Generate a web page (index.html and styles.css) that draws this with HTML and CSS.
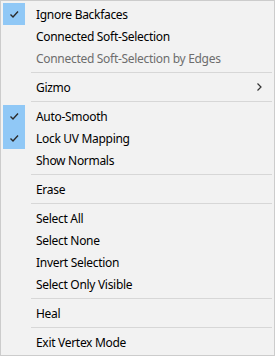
FILE: index.html
```html
<!DOCTYPE html>
<html>
<head>
<meta charset="utf-8">
<link rel="stylesheet" href="styles.css">
</head>
<body>
<div class="menu">
  <div class="item checked"><span class="check"><svg width="22" height="22" viewBox="0 0 22 22"><path d="M7.5 11.5 L10 14 L15 8.5" fill="none" stroke="#2b2b2b" stroke-width="1.4"/></svg></span><span class="label">Ignore Backfaces</span></div>
  <div class="item"><span class="check"></span><span class="label">Connected Soft-Selection</span></div>
  <div class="item disabled"><span class="check"></span><span class="label">Connected Soft-Selection by Edges</span></div>
  <div class="sep"></div>
  <div class="item"><span class="check"></span><span class="label">Gizmo</span><svg class="arrow" width="5" height="8" viewBox="0 0 5 8"><path d="M0.5 0.5 L4 4 L0.5 7.5" fill="none" stroke="#333" stroke-width="1.2"/></svg></div>
  <div class="sep"></div>
  <div class="item checked"><span class="check"><svg width="22" height="22" viewBox="0 0 22 22"><path d="M7.5 11.5 L10 14 L15 8.5" fill="none" stroke="#2b2b2b" stroke-width="1.4"/></svg></span><span class="label">Auto-Smooth</span></div>
  <div class="item checked"><span class="check"><svg width="22" height="22" viewBox="0 0 22 22"><path d="M7.5 11.5 L10 14 L15 8.5" fill="none" stroke="#2b2b2b" stroke-width="1.4"/></svg></span><span class="label">Lock UV Mapping</span></div>
  <div class="item"><span class="check"></span><span class="label">Show Normals</span></div>
  <div class="sep"></div>
  <div class="item"><span class="check"></span><span class="label">Erase</span></div>
  <div class="sep"></div>
  <div class="item"><span class="check"></span><span class="label">Select All</span></div>
  <div class="item"><span class="check"></span><span class="label">Select None</span></div>
  <div class="item"><span class="check"></span><span class="label">Invert Selection</span></div>
  <div class="item"><span class="check"></span><span class="label">Select Only Visible</span></div>
  <div class="sep"></div>
  <div class="item"><span class="check"></span><span class="label">Heal</span></div>
  <div class="sep"></div>
  <div class="item"><span class="check"></span><span class="label">Exit Vertex Mode</span></div>
</div>
</body>
</html>
```
FILE: styles.css
```css
html, body {
  margin: 0;
  padding: 0;
  background: #f2f2f2;
}
.menu {
  box-sizing: border-box;
  width: 275px;
  height: 356px;
  border: 1px solid #cccccc;
  background: #f2f2f2;
  padding: 2px;
  font-family: "Noto Sans", sans-serif;
  font-size: 12px;
  letter-spacing: -0.3px;
  color: #000;
}
.item {
  display: flex;
  align-items: center;
  height: 22px;
}
.check {
  flex: none;
  width: 22px;
  height: 22px;
  margin-right: 11px;
}
.check svg {
  display: block;
}
.checked .check {
  background: #90c8f6;
}
.label {
  flex: 1;
  white-space: nowrap;
}
.disabled .label {
  color: #6d6d6d;
}
.arrow {
  flex: none;
  margin-right: 10px;
}
.sep {
  height: 1px;
  background: #d7d7d7;
  margin: 3px 0 3px 28px;
}
```
